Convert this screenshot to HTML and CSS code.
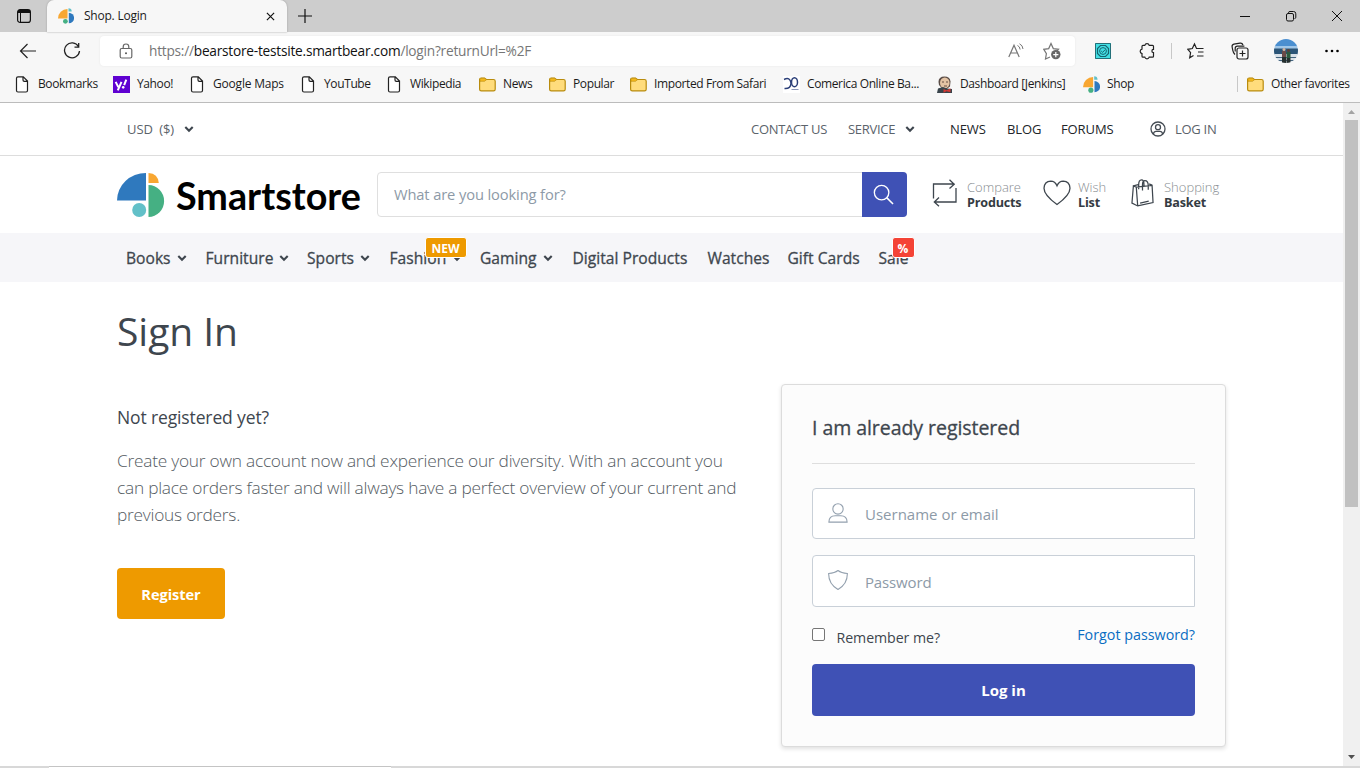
FILE: index.html
```html
<!DOCTYPE html>
<html lang="en">
<head>
<meta charset="utf-8">
<title>Shop. Login</title>
<link rel="stylesheet" href="styles.css">
</head>
<body>
<svg class="defs" width="0" height="0">
  <symbol id="doc" viewBox="0 0 17 17"><path d="M4 .8h5.300l4.200 4.200v9.500a1.500 1.500 0 0 1-1.500 1.500h-8a1.500 1.500 0 0 1-1.500-1.500v-12.200a1.500 1.500 0 0 1 1.500-1.500zM9 1v3a1.300 1.300 0 0 0 1.300 1.300h3" fill="#fff" stroke="#222" stroke-width="1.200"/></symbol>
  <symbol id="folder" viewBox="0 0 17 17"><path d="M.6 3.500a1.500 1.500 0 0 1 1.500-1.500h3.300l2 1.500h7.100a1.700 1.700 0 0 1 1.700 1.700v8a1.700 1.700 0 0 1-1.700 1.700h-12.200a1.700 1.700 0 0 1-1.700-1.700z" fill="#ffdc7c" stroke="#b98c0e" stroke-width="1.200"/><path d="M1 5.300h4.500l2-1.600-2-1.400h-3.500l-1 1z" fill="#f3b71c" stroke="#b98c0e" stroke-width=".6"/></symbol>
  <symbol id="shop" viewBox="0 0 16 16"><path d="M0 10.500A9.500 9.500 0 0 1 9.500 1v9.500z" fill="#f8a732"/><path d="M10.500.3a3.200 3.200 0 0 1 3.200 3.200h-3.200z" fill="#62c0c8"/><path d="M10.800 4.700a5.300 5.300 0 0 1 0 10.600z" fill="#2f79be"/><circle cx="7.400" cy="13.300" r="2.400" fill="#45b083"/></symbol>
  <symbol id="chev" viewBox="0 0 10 8"><path d="M1.300 2l3.700 3.700L8.700 2" fill="none" stroke="currentColor" stroke-width="2.100"/></symbol>
</svg>
<div class="browser">
  <div class="tabstrip">
    <svg class="tabmenu" viewBox="0 0 16 16"><rect x="1.600" y="1.600" width="12.800" height="12.800" rx="2.500" fill="none" stroke="#111" stroke-width="1.200"/><path d="M2 2h12v3H2z" fill="#111"/><path d="M4.500 5v9.500" stroke="#111"/></svg>
    <div class="tab">
      <svg class="favicon"><use href="#shop"/></svg>
      <span class="tab-title">Shop. Login</span>
      <svg class="tab-close" viewBox="0 0 10 10"><path d="M1 1l8 8M9 1l-8 8" stroke="#111" stroke-width="1.300"/></svg>
    </div>
    <svg class="newtab" viewBox="0 0 16 16"><path d="M8 1v14M1 8h14" stroke="#111" stroke-width="1.200"/></svg>
    <div class="wincontrols">
      <svg viewBox="0 0 12 12"><path d="M1 6.500h10" stroke="#111"/></svg>
      <svg viewBox="0 0 12 12"><rect x="1.500" y="3.500" width="7" height="7.500" rx="1.500" fill="none" stroke="#111"/><path d="M3.500 3.300v-.6q0-1.200 1.500-1.200h3.500q2.300 0 2.300 2.300v3.500q0 1.200-1.300 1.300" fill="none" stroke="#111"/></svg>
      <svg viewBox="0 0 12 12"><path d="M1 1l10 10M11 1L1 11" stroke="#111"/></svg>
    </div>
  </div>
  <div class="toolbar">
    <svg class="back" viewBox="0 0 18 18"><path d="M17 9H1.500M8.500 2l-7 7 7 7" fill="none" stroke="#222" stroke-width="1.200"/></svg>
    <svg class="reload" viewBox="0 0 18 18"><path d="M15.500 4.500A7.500 7.500 0 1 0 16.500 9M15.700 1v4.200h-4.200" fill="none" stroke="#222" stroke-width="1.300"/></svg>
    <div class="address">
      <svg class="lock" viewBox="0 0 14 16"><rect x="1.200" y="5.500" width="11.600" height="9.500" rx="1.500" fill="none" stroke="#666" stroke-width="1.200"/><path d="M4.200 5.500v-1.700a2.800 2.800 0 0 1 5.600 0v1.700" fill="none" stroke="#666" stroke-width="1.200"/><circle cx="7" cy="10.200" r="1" fill="#555"/></svg>
      <span class="url">https://<b>bearstore-testsite.smartbear.com</b>/login?returnUrl=%2F</span>
      <svg class="read" viewBox="0 0 16 16"><path d="M.8 14L6 2.200l5.200 11.800M2.600 10h6.800" fill="none" stroke="#767676" stroke-width="1.200"/><path d="M9.500 2.500q2.500 1 2.600 4M11.500.8q3.300 1.500 3.500 5.200" fill="none" stroke="#767676"/></svg>
      <svg class="addfav" viewBox="0 0 18 18"><path d="M7 15l-4.500 2 .9-5.400L.8 7.300l4.900-.7L8 1.500l2.300 5.100 5.200.7-1.500 1.500" fill="none" stroke="#767676" stroke-width="1.200"/><circle cx="12.800" cy="12.600" r="4.700" fill="#666"/><path d="M12.800 10v5.200M10.200 12.600h5.200" stroke="#fff" stroke-width="1.200"/></svg>
    </div>
    <div class="tools">
      <svg viewBox="0 0 16 16" class="t16"><path fill="#42dfe4" d="M0 0h16v16H0z"/><path d="M.5.5h15v15H.5z" fill="none" stroke="#246f78"/><path d="M5.500 2.500h5l3 3v5l-3 3h-5l-3-3v-5z" fill="none" stroke="#176470" stroke-width="1.200"/><circle cx="8" cy="8" r="3.400" fill="none" stroke="#176470"/><path d="M6.200 8l1.400 1.400 2.500-2.700" fill="none" stroke="#176470"/></svg>
      <svg viewBox="0 0 18 18" class="t18"><path d="M5 3.300h1.800a2.300 2.300 0 0 1 4.400 0h3.300q1 0 1 1v3a1.600 1.600 0 0 0 0 3.200v3.700q0 1-1 1h-3.300a2.300 2.300 0 0 1-4.400 0H5q-1 0-1-1v-2.600a2.300 2.300 0 0 1 0-4.500V4.300q0-1 1-1z" fill="none" stroke="#222" stroke-width="1.200"/></svg>
      <i class="sep"></i>
      <svg viewBox="0 0 18 18" class="t18"><path d="M6.500 13.500l-3.800 2.300.9-5.100L.9 7.300l4.400-.8L7.500 2l2 4.500h7M11 10h5.500M10 14h6.500" fill="none" stroke="#222" stroke-width="1.200"/></svg>
      <svg viewBox="0 0 18 18" class="t18"><path d="M4 12.500Q2.300 11 1.800 8.300L1.100 4.800Q.8 2.700 2.900 2.200L9 1.100q2.200-.4 3 1.900M4.200 9.500V6.200q0-2.100 2.200-2.100h7" fill="none" stroke="#222" stroke-width="1.200"/><rect x="6" y="6" width="11" height="11" rx="2" fill="#f7f7f7" stroke="#222" stroke-width="1.200"/><path d="M11.500 8.500v6M8.500 11.500h6" stroke="#222" stroke-width="1.200"/></svg>
      <svg viewBox="0 0 24 24" class="t24"><clipPath id="av"><circle cx="12" cy="12" r="12"/></clipPath><g clip-path="url(#av)"><path fill="#4b8fd0" d="M0 0h24v8H0z"/><path fill="#9fc6e8" d="M0 7h24v3H0z"/><path fill="#2c5577" d="M0 9.500h24v6H0z"/><path fill="#d9e1e8" d="M0 15h24v9H0z"/><path stroke="#43637d" d="M0 18.500h24M0 21.500h24"/><path fill="#6b4a48" d="M8 12h4v7H8z"/><path fill="#26302f" d="M8 18h4v6H8zM12.500 19h4v5h-4z"/><path fill="#2c5b3e" d="M12.500 13h4v6h-4z"/><circle cx="10" cy="10.500" r="1.500" fill="#d5b5a0"/><circle cx="14.500" cy="11.500" r="1.500" fill="#5a4038"/></g></svg>
      <svg viewBox="0 0 16 16" class="t16"><circle cx="2.500" cy="8" r="1.300"/><circle cx="8" cy="8" r="1.300"/><circle cx="13.500" cy="8" r="1.300"/></svg>
    </div>
  </div>
  <div class="bookmarks">
    <div class="bm"><svg><use href="#doc"/></svg><span>Bookmarks</span></div>
    <div class="bm"><svg viewBox="0 0 16 16"><path fill="#5f01d1" d="M0 0h16v16H0z"/><path d="M2.500 5.500l2.500 5M8 5.500L4.500 13.500M12.500 3.500l-2 5" stroke="#fff" stroke-width="1.900"/><circle cx="9.600" cy="10.700" r="1.200" fill="#fff"/></svg><span>Yahoo!</span></div>
    <div class="bm wide"><svg><use href="#doc"/></svg><span>Google Maps</span></div>
    <div class="bm"><svg><use href="#doc"/></svg><span>YouTube</span></div>
    <div class="bm"><svg><use href="#doc"/></svg><span>Wikipedia</span></div>
    <div class="bm"><svg><use href="#folder"/></svg><span>News</span></div>
    <div class="bm"><svg><use href="#folder"/></svg><span>Popular</span></div>
    <div class="bm"><svg><use href="#folder"/></svg><span>Imported From Safari</span></div>
    <div class="bm"><svg viewBox="0 0 17 17"><path fill="#fff" d="M0 0h17v17H0z"/><path d="M1 3.500q6-3 7 3.500 0 6-6.500 5.500" fill="none" stroke="#2b3f78" stroke-width="1.400"/><ellipse cx="11.500" cy="6.200" rx="3" ry="4.500" fill="none" stroke="#2b3f78" stroke-width="1.500"/><path d="M8.500 13.500h7" stroke="#8b97b8"/></svg><span>Comerica Online Ba...</span></div>
    <div class="bm"><svg viewBox="0 0 17 17"><path d="M2.500 6q0-5.500 6-5.500 5.500 0 6 5l-.5 5-4 3H7L3 9z" fill="#5a4c46"/><ellipse cx="8.800" cy="6.900" rx="4.800" ry="5.400" fill="#e3c3a4"/><path d="M1 17l1-4.500 5-1.500 4 1.500 5 .5v4z" fill="#39444b"/><path d="M7.500 13l3 1.200 4-1.700v3.800l-4-1-3 1.400z" fill="#d33833"/><path d="M6 6h2M10 6h2M8 10h3" stroke="#57423b" stroke-width=".9"/></svg><span>Dashboard [Jenkins]</span></div>
    <div class="bm"><svg viewBox="0 0 16 16"><use href="#shop"/></svg><span>Shop</span></div>
    <i class="sep"></i>
    <div class="bm"><svg><use href="#folder"/></svg><span>Other favorites</span></div>
  </div>
</div>
<div class="viewport">
  <div class="page">
    <div class="menubar">
      <div class="wrap menu-row">
        <span class="m-light m-usd">USD&nbsp; ($)</span><svg class="mchev"><use href="#chev"/></svg>
        <span class="m-light">CONTACT US</span>
        <span class="m-light">SERVICE</span><svg class="mchev"><use href="#chev"/></svg>
        <span class="m-dark">NEWS</span>
        <span class="m-dark">BLOG</span>
        <span class="m-dark">FORUMS</span>
        <svg class="muser" viewBox="0 0 16 16" fill="none" stroke="#454c54" stroke-width="1.300"><circle cx="8" cy="8" r="7"/><circle cx="8" cy="6.200" r="2.500"/><path d="M3.300 13q.7-2.700 2.700-2.700h4q2 0 2.700 2.700"/></svg>
        <span class="m-light">LOG IN</span>
      </div>
    </div>
    <div class="shopbar wrap">
      <svg class="logo" viewBox="0 0 246 46"><path d="M0 27.500A29 27.500 0 0 1 29 0v27.500z" fill="#2f79be"/><path d="M31.500 0q9.500.5 10.300 10H31.500z" fill="#f8a732"/><path d="M31.500 12a15.600 16 0 0 1 0 32z" fill="#45b083"/><circle cx="22.200" cy="37" r="7" fill="#62c0c8"/><text x="59" y="37" textLength="185" lengthAdjust="spacingAndGlyphs" class="logo-text">Smartstore</text></svg>
      <div class="search"><span>What are you looking for?</span><div class="search-btn"><svg viewBox="0 0 22 22"><circle cx="9" cy="9" r="7.600" fill="none" stroke="#fff" stroke-width="1.400"/><path d="M14.300 14.300l6.700 6.700" stroke="#fff" stroke-width="1.600"/></svg></div></div>
      <div class="tool compare"><svg class="i-cmp" viewBox="0 0 26 28" fill="none" stroke="#3e464e" stroke-width="1.300"><path d="M2.500 19.500V5h21M18.500.8l4.700 4.400-4.700 4.300M25 9v14H3.500M8 18.500l-4.700 4.500L8 27.300"/></svg><div><span>Compare</span><b>Products</b></div></div>
      <div class="tool wish"><svg class="i-heart" viewBox="0 0 28 26" fill="none" stroke="#3e464e" stroke-width="1.300"><path d="M14 24.500Q1 15 1 8.200 1.300 1.500 7.800 1.200 12 1.300 14 5.800 16 1.300 20.200 1.200 26.700 1.500 27 8.200 27 15 14 24.500z"/></svg><div><span>Wish</span><b>List</b></div></div>
      <div class="tool basket"><svg class="i-bag" viewBox="0 0 24 29" fill="none" stroke="#3e464e" stroke-width="1.300"><path d="M2.500 7l3 1.300L22 6.500l1 18L7 28l-6-3zM5.500 8.300L7 28M2.500 7l5-1.300M19 5l3 1.500M9.500 25l9-2M8 10.500V6Q8 .8 11 .8 13.500.8 13.500 5v2M12 12V6Q12 1.500 14.500 1.500 18 1.500 18 7v4"/></svg><div><span>Shopping</span><b>Basket</b></div></div>
    </div>
    <div class="nav">
      <div class="wrap nav-row">
        <div>Books<svg><use href="#chev"/></svg></div>
        <div>Furniture<svg><use href="#chev"/></svg></div>
        <div>Sports<svg><use href="#chev"/></svg></div>
        <div>Fashion<svg><use href="#chev"/></svg><em class="badge new">NEW</em></div>
        <div>Gaming<svg><use href="#chev"/></svg></div>
        <div>Digital Products</div>
        <div>Watches</div>
        <div>Gift Cards</div>
        <div>Sale<em class="badge pct">%</em></div>
      </div>
    </div>
    <div class="wrap content">
      <div class="intro">
        <h1>Sign In</h1>
        <h2>Not registered yet?</h2>
        <p>Create your own account now and experience our diversity. With an account you<br>can place orders faster and will always have a perfect overview of your current and<br>previous orders.</p>
        <div class="register">Register</div>
      </div>
      <div class="card">
        <h3>I am already registered</h3>
        <div class="input"><svg viewBox="0 0 22 22" fill="none" stroke="#93a0ae" stroke-width="1.200"><circle cx="11" cy="6.500" r="5.700"/><path d="M1 21q0-7 7-7h6q7 0 7 7z"/></svg><span>Username or email</span></div>
        <div class="input"><svg viewBox="0 0 22 22" fill="none" stroke="#93a0ae" stroke-width="1.200"><path d="M11 .6q3.500 2.700 10.300 3.200Q21.500 15.500 11 21.500.5 15.500.7 3.800 7.500 3.300 11 .6z"/></svg><span>Password</span></div>
        <div class="options"><i class="check"></i><span class="remember">Remember me?</span><a class="forgot">Forgot password?</a></div>
        <div class="login">Log in</div>
      </div>
    </div>
  </div>
  <div class="scroll"><svg class="up" viewBox="0 0 7 4"><path d="M0 4l3.500-4L7 4z" fill="#a3a3a3"/></svg><i class="thumb"></i><svg class="down" viewBox="0 0 7 4"><path d="M0 0h7L3.500 4z" fill="#505050"/></svg></div>
</div>
<div class="edge"><i></i></div>
</body>
</html>
```
FILE: styles.css
```css
*{box-sizing:border-box}
body{margin:0;width:1360px;height:768px;overflow:hidden;background:#fff;font-family:"Open Sans","Noto Sans",sans-serif;color:#3e464e;display:flex;flex-direction:column}
svg{display:block;flex:none}
.defs{position:absolute}
.browser{height:103px;background:#f7f7f7;border-bottom:1px solid #bcbcbc;flex:none;color:#1b1b1b}
.tabstrip{height:32px;background:#cdcdcd;display:flex;align-items:center}
.tabmenu{width:16px;height:16px;margin-left:16px}
.tab{width:240px;height:32px;margin-left:15px;background:#f7f7f7;border-radius:7px 7px 0 0;display:flex;align-items:center;padding:0 12px 0 11px;box-shadow:0 0 2px #999}
.favicon{width:16px;height:16px}
.tab-title{font-size:12px;margin-left:10px;letter-spacing:-.22px;flex:1;padding-bottom:1px}
.tab-close{width:9px;height:9px}
.newtab{width:16px;height:16px;margin-left:10px}
.wincontrols{display:flex;gap:34px;margin-left:auto;padding-right:17px}
.wincontrols svg{width:12px;height:12px}
.toolbar{height:38px;display:flex;align-items:center}
.back{width:18px;height:18px;margin-left:19px}
.reload{width:18px;height:18px;margin-left:26px}
.address{width:975px;height:30px;margin-left:19px;background:#fff;border-radius:4px;display:flex;align-items:center;box-shadow:0 0 2px #e4e4e4}
.lock{width:14px;height:16px;margin-left:19px}
.url{font-size:13.700px;margin-left:16px;color:#767676;letter-spacing:-.24px;flex:1;white-space:nowrap;padding-bottom:1px}
.url b{font-weight:400;color:#111}
.read{width:16px;height:16px;margin-right:19px}
.addfav{width:18px;height:18px;margin-right:14px}
.tools{display:grid;grid-template-columns:43px 33px 16px 44px 43px 50px 20px;align-items:center;margin-left:20px}
.t16{width:16px;height:16px}
.t18{width:18px;height:18px}
.t24{width:24px;height:24px}
.sep{width:1px;height:16px;background:#c8c8c8}
.bookmarks{height:28px;padding-left:14px;display:grid;grid-template-columns:99px 76px 111px 86px 93px 70px 81px 153px 153px 147px 154px 10px 110px;align-items:center}
.bm{display:flex;align-items:center;gap:7px;font-size:12px;letter-spacing:-.38px;white-space:nowrap}
.bm span{padding-bottom:2px}
.wide{letter-spacing:-.2px}
.bm svg{width:17px;height:17px}
.viewport{height:663px;display:flex;flex:none}
.page{width:1343px}
.wrap{padding-left:117px}
.menubar{height:53px;border-bottom:1px solid #ddd}
.menu-row{height:52px;padding-left:127px;display:grid;grid-template-columns:57px 567px 97px 57px 45px 57px 54px 89px 25px 60px;align-items:center;font-size:13px;letter-spacing:-.28px;white-space:nowrap}
.m-light{font-weight:400;color:#5b636b}
.m-usd{letter-spacing:-.1px}
.m-dark{color:#212529;letter-spacing:-.1px}
.mchev{width:10px;height:8px}
.muser{width:16px;height:16px}
.shopbar{height:77px;display:flex;align-items:center}
.logo{width:246px;height:46px;margin-top:2px;overflow:visible}
.logo-text{font:700 38.500px Lato,sans-serif;fill:#000}
.search{width:530px;height:45px;margin-left:14px;border:1px solid #dfdfdf;border-radius:4px;display:flex;align-items:center;padding-left:16px;font-size:14.700px;letter-spacing:-.12px;color:#8d9aa7}
.search span{flex:1;padding-bottom:2px}
.search-btn{width:45px;height:45px;margin-right:-1px;background:#3f51b5;border-radius:0 4px 4px 0;display:flex;align-items:center;justify-content:center;padding:0 2px 1px 0}
.search-btn svg{width:21px;height:21px}
.tool{display:flex;align-items:center;font-size:13px;line-height:15px;white-space:nowrap}
.tool div{display:flex;flex-direction:column}
.tool span{color:#888d91;font-weight:300}
.tool b{font-weight:700;color:#343b42;font-size:12.600px;letter-spacing:-.18px}
.i-cmp{width:26px;height:28px;margin-right:10px;margin-bottom:4px}
.i-heart{width:28px;height:26px;margin:0 7px 3px 1px}
.i-bag{width:23px;height:28px;margin-right:10px;margin-bottom:4px}
.compare{margin-left:24px;width:111px}
.wish{width:89px}
.nav{height:49px;background:#f6f6f9;padding-top:1px}
.nav-row{height:48px;padding-left:126px;display:grid;grid-template-columns:79.500px 101.500px 82.500px 90.500px 92.500px 135px 80px 91px 60px;align-items:center;font-size:15.600px;letter-spacing:.02px;-webkit-text-stroke:.3px #3e464e;white-space:nowrap}
.nav-row div{display:flex;align-items:center;position:relative;height:22px}
.nav-row svg{width:10px;height:8px;margin-left:6px}
.badge{position:absolute;font-style:normal;color:#fff;font-weight:700;font-size:12px;height:21px;line-height:21px;border:1px solid #fff;border-radius:3px;text-align:center;-webkit-text-stroke:0}
.new{left:35px;top:-10px;width:42px;background:#ee9a00}
.pct{left:13px;top:-10px;width:23px;background:#f44336}
.content{display:flex}
.intro{width:664px}
h1,h2,h3,p{margin:0}
h1{font-size:39px;font-weight:400;line-height:48px;margin-top:25px;letter-spacing:-.05px}
h2{font-size:17.500px;font-weight:400;line-height:24px;margin-top:50px;letter-spacing:-.13px}
p{font-size:17.300px;font-weight:300;line-height:27px;margin-top:18px;letter-spacing:-.23px;white-space:nowrap;color:#555c63}
.register{width:108px;height:51px;margin-top:40px;background:#ee9a00;border-radius:4px;color:#fff;font-weight:700;font-size:14.600px;letter-spacing:-.05px;line-height:52px;text-align:center}
.card{width:445px;height:363px;margin-top:102px;background:#fcfcfc;border:1px solid #dcdcdc;border-radius:4px;box-shadow:0 2px 4px rgba(0,0,0,.12);padding:30px;display:flex;flex-direction:column}
h3{font-size:19.500px;font-weight:400;-webkit-text-stroke:.3px #3e464e;line-height:26px;height:49px;border-bottom:1px solid #dedede;margin-bottom:24px;letter-spacing:-.05px}
.input{height:51px;border:1px solid #c9d0d8;border-radius:4px 0 0 4px;background:#fff;display:flex;align-items:center;padding-left:15px;font-size:15px;color:#8d9aa7;margin-bottom:16px}
.input svg{width:20px;height:20px;margin-right:17px;margin-bottom:2px}
.input span{padding-top:1px}
.input + .input{height:52px;letter-spacing:-.15px}
.options{display:flex;height:57px;padding-top:5px;font-size:14.200px;line-height:20px}
.check{width:13px;height:13px;border:1px solid #767676;border-radius:2px;background:#fff}
.remember{margin-left:11.500px;letter-spacing:-.07px}
.forgot{margin-left:auto;margin-top:-3px;color:#0a6dc2;font-size:14.300px}
.login{height:52px;background:#3f51b5;border-radius:4px;color:#fff;font-weight:700;font-size:15px;line-height:52px;text-align:center;flex:none;margin-top:-16px}
.scroll{width:17px;background:#f0f0f0;display:flex;flex-direction:column;align-items:center}
.up,.down{width:7px;height:4px}
.up{margin-top:7px}
.thumb{width:13px;height:387px;margin-top:6px;background:#c1c1c1}
.down{margin-top:auto;margin-bottom:7px}
.edge{height:2px;background:#d8d8d8;padding-left:49px}
.edge i{display:block;width:342px;height:2px;background:#fff;border-top:1px solid #c4c4c4}
```
